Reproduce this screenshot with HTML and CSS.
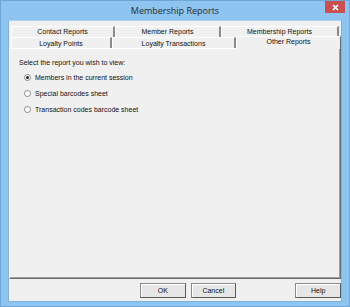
FILE: index.html
```
<!DOCTYPE html>
<html>
<head>
<meta charset="utf-8">
<link rel="stylesheet" href="styles.css">
</head>
<body>
<div class="window">
  <div class="titlebar">
    <span></span>
    <span class="title">Membership Reports</span>
    <span class="close"><svg width="7" height="7" viewBox="0 0 7 7"><path d="M1 1L6 6M6 1L1 6" stroke="#fff" stroke-width="1.6"/></svg></span>
  </div>
  <div class="client">
    <div class="tabs">
      <div class="row back">
        <div class="tab w1">Contact Reports</div>
        <div class="tab w2">Member Reports</div>
        <div class="tab w3">Membership Reports</div>
      </div>
      <div class="row front">
        <div class="tab w4">Loyalty Points</div>
        <div class="tab w5">Loyalty Transactions</div>
        <div class="tab w6 active">Other Reports</div>
      </div>
    </div>
    <div class="panel">
      <div class="prompt">Select the report you wish to view:</div>
      <div class="options">
        <label class="opt"><span class="radio checked"></span>Members in the current session</label>
        <label class="opt"><span class="radio"></span>Special barcodes sheet</label>
        <label class="opt"><span class="radio"></span>Transaction codes barcode sheet</label>
      </div>
    </div>
    <div class="buttons">
      <button class="btn">OK</button>
      <button class="btn">Cancel</button>
      <span class="spacer"></span>
      <button class="btn">Help</button>
    </div>
  </div>
</div>
</body>
</html>
```
FILE: styles.css
```
html, body { margin: 0; padding: 0; }
body { background: #8dc4f0; font-family: "Liberation Sans", Arial, sans-serif; }
.window {
  width: 350px; height: 307px; box-sizing: border-box;
  background: #8dc4f0; border: 1px solid #6fa6d6;
  display: flex; flex-direction: column;
}
.titlebar {
  height: 19px; display: grid; grid-template-columns: 1fr auto 1fr; align-items: start;
}
.title { font-size: 9px; color: #2b2b2b; line-height: 20px; font-family: "Open Sans", "Liberation Sans", sans-serif; }
.close {
  justify-self: end; margin-right: 4px; width: 20px; height: 12px; background: #c75050;
  display: flex; align-items: center; justify-content: center;
}
.client {
  margin: 0 7px; height: 282px; background: #f0f0f0;
  display: flex; flex-direction: column; font-size: 7px; color: #111;
  box-sizing: border-box; border: 1px solid #7fb2de; border-top: 1px solid #b0d3f0;
}
.tabs { display: flex; flex-direction: column; padding: 5px 0 0 2px; position: relative; z-index: 1; }
.row { display: flex; height: 11px; }
.tab {
  box-sizing: border-box; text-align: center; line-height: 10px;
  border-top: 1px solid #fff; border-left: 1px solid #fff; border-right: 2px solid #8a8a8a;
  background: #f0f0f0;
}
.w1 { width: 104px; } .w2 { width: 106px; } .w3 { width: 118px; }
.w4 { width: 101px; } .w5 { width: 124px; } .w6 { width: 105px; }
.front .tab { line-height: 11px; }
.tab.active {
  margin-top: -1px; height: 13px; line-height: 10px; margin-left: 0;
  border-right: 1px solid #6a6a6a; border-left: 1px solid #fff;
}
.panel {
  margin: 0 0 0 0; height: 231px; box-sizing: border-box;
  border-top: 1px solid #fff; border-left: 1px solid #fff;
  border-right: 1px solid #696969; border-bottom: 1px solid #696969;
  box-shadow: inset -1px -1px 0 #a0a0a0;
  padding: 10px 0 0 9px;
}
.prompt { line-height: 8px; }
.options { display: flex; flex-direction: column; gap: 8px; margin-top: 6px; padding-left: 5px; }
.opt { display: flex; align-items: center; height: 8px; gap: 4px; }
.radio {
  width: 5px; height: 5px; border-radius: 50%; border: 1px solid #8a8a8a; background: #fff;
  display: inline-flex; align-items: center; justify-content: center;
}
.radio.checked::after { content: ""; width: 3px; height: 3px; border-radius: 50%; background: #222; }
.buttons { display: flex; padding: 4px 0 0 131px; gap: 5px; }
.spacer { width: 51px; }
.btn {
  width: 47px; height: 15px; padding: 0; font: inherit; font-size: 7px; color: #111;
  background: #e6e6e6; border: 1px solid #8a8a8a; border-right-color: #5a5a5a; border-bottom-color: #5a5a5a;
  box-shadow: inset 1px 1px 0 #fff;
}
```
